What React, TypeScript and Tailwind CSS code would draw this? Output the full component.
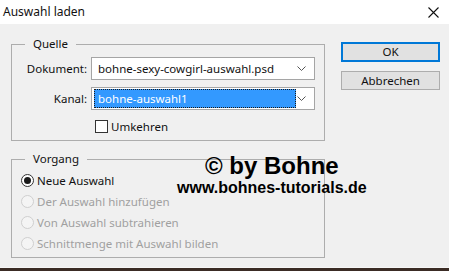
import React from "react";

const Chevron = () => (
  <svg width="9" height="5" viewBox="0 0 9 5" className="shrink-0">
    <polyline points="0.5,0.5 4.5,4.5 8.5,0.5" fill="none" stroke="#555" strokeWidth="1" />
  </svg>
);

const Radio = ({ checked, disabled, label }: { checked?: boolean; disabled?: boolean; label: string }) => (
  <div className="h-[21px] flex items-center">
    <div
      className={
        "w-[13px] h-[13px] rounded-full border flex items-center justify-center " +
        (disabled ? "border-[#cfcfcf] bg-[#f4f4f4]" : "border-[#333333] bg-white")
      }
    >
      {checked && <div className="w-[7px] h-[7px] rounded-full bg-[#1a1a1a]" />}
    </div>
    <span className={"ml-[3px] " + (disabled ? "text-[#a0a0a0]" : "text-[#111]")}>{label}</span>
  </div>
);

export default function App() {
  return (
    <div
      className="w-[449px] h-[271px] flex flex-col overflow-hidden text-[11.5px] text-[#111]"
      style={{ fontFamily: '"Noto Sans", "Open Sans", sans-serif' }}
    >
      <div className="h-[24px] bg-white flex items-center justify-between pl-[3px] pr-[10px]">
        <span className="text-[12px] text-[#111] leading-none">Auswahl laden</span>
        <svg width="11" height="11" viewBox="0 0 11 11">
          <path d="M0.5 0.5 L10.5 10.5 M10.5 0.5 L0.5 10.5" stroke="#111" strokeWidth="1.1" fill="none" />
        </svg>
      </div>
      <div className="flex-1 bg-[#f0f0f0] relative flex border-b border-[#f7f7f7]">
        <div className="pl-[11px] pt-[20px] w-[325px]">
          <div className="relative border border-[#adadad] h-[97px] w-[314px]">
            <span className="absolute left-[13px] top-[-10px] px-[8px] bg-[#f0f0f0] leading-[18px]">Quelle</span>
            <div className="pt-[12px] grid grid-cols-[75px_224px] gap-x-[4px] gap-y-[7px] items-center">
              <span className="text-right">Dokument:</span>
              <div className="h-[23px] border border-[#a5a5a5] bg-white flex items-center pl-[6px] pr-[8px] justify-between">
                <span>bohne-sexy-cowgirl-auswahl.psd</span>
                <Chevron />
              </div>
              <span className="text-right">Kanal:</span>
              <div className="h-[23px] border border-[#a5a5a5] bg-white flex items-center pl-[2px] pr-[8px] justify-between">
                <div className="h-[19px] w-[202px] bg-[#3399ff] border border-dotted border-[#1b1b1b] text-white flex items-center pl-[3px]">
                  bohne-auswahl1
                </div>
                <Chevron />
              </div>
            </div>
            <div className="mt-[8px] ml-[83px] flex items-center">
              <div className="w-[13px] h-[13px] border border-[#333] bg-white" />
              <span className="ml-[3px]">Umkehren</span>
            </div>
          </div>
          <div className="relative border border-[#adadad] h-[99px] w-[314px] mt-[18px]">
            <span className="absolute left-[13px] top-[-10px] px-[8px] bg-[#f0f0f0] leading-[18px]">Vorgang</span>
            <div className="pt-[10px] pl-[9px] flex flex-col">
              <Radio checked label="Neue Auswahl" />
              <Radio disabled label="Der Auswahl hinzufügen" />
              <Radio disabled label="Von Auswahl subtrahieren" />
              <Radio disabled label="Schnittmenge mit Auswahl bilden" />
            </div>
          </div>
        </div>
        <div className="pl-[16px] pt-[18px] flex flex-col gap-[9px]">
          <div className="w-[99px] h-[20px] border-2 border-[#0078d7] bg-[#e1e1e1] flex items-center justify-center">
            OK
          </div>
          <div className="w-[99px] h-[19px] border border-[#adadad] bg-[#e1e1e1] flex items-center justify-center">
            Abbrechen
          </div>
        </div>
        <div
          className="absolute left-[177px] top-[128px] flex flex-col items-center text-black font-bold pointer-events-none"
          style={{ fontFamily: '"Liberation Sans", Arial, sans-serif' }}
        >
          <span className="text-[24px] leading-[27px]">© by Bohne</span>
          <span className="text-[16px] leading-[18px]">www.bohnes-tutorials.de</span>
        </div>
      </div>
      <div className="h-[3px] bg-[#3b2c25]" />
    </div>
  );
}
